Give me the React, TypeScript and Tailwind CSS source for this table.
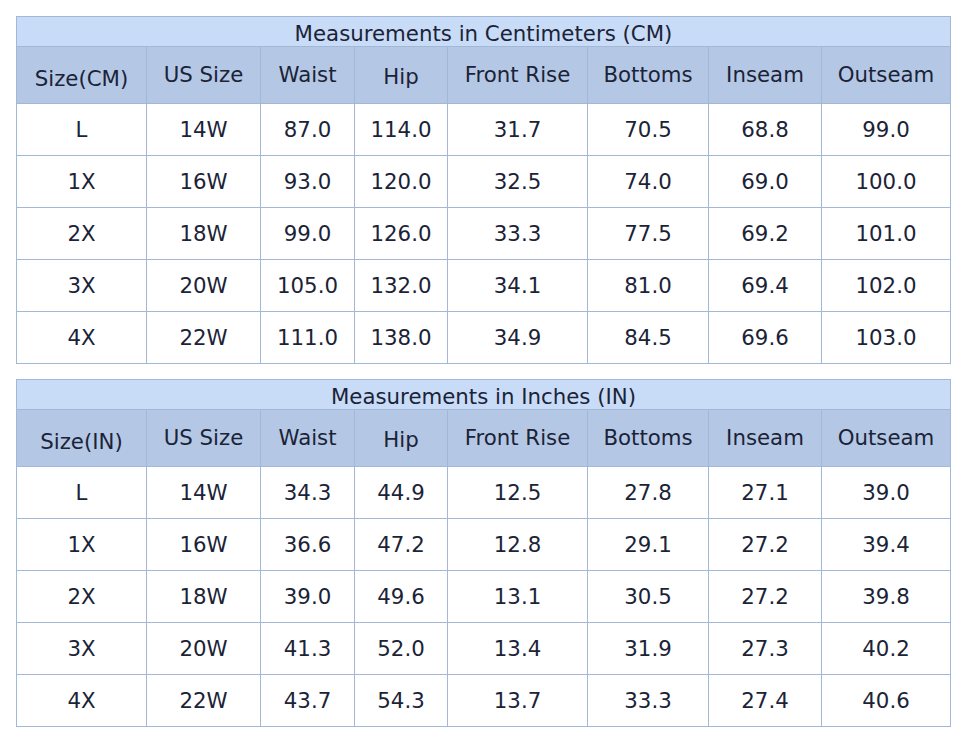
import React from "react";

const widths = ["w-[130px]", "w-[114px]", "w-[94px]", "w-[93px]", "w-[140px]", "w-[121px]", "w-[113px]", "w-[129px]"];

type T = { title: string; sizeLabel: string; rows: string[][] };

const cm: T = {
  title: "Measurements in Centimeters (CM)",
  sizeLabel: "Size(CM)",
  rows: [
    ["L", "14W", "87.0", "114.0", "31.7", "70.5", "68.8", "99.0"],
    ["1X", "16W", "93.0", "120.0", "32.5", "74.0", "69.0", "100.0"],
    ["2X", "18W", "99.0", "126.0", "33.3", "77.5", "69.2", "101.0"],
    ["3X", "20W", "105.0", "132.0", "34.1", "81.0", "69.4", "102.0"],
    ["4X", "22W", "111.0", "138.0", "34.9", "84.5", "69.6", "103.0"],
  ],
};

const inch: T = {
  title: "Measurements in Inches (IN)",
  sizeLabel: "Size(IN)",
  rows: [
    ["L", "14W", "34.3", "44.9", "12.5", "27.8", "27.1", "39.0"],
    ["1X", "16W", "36.6", "47.2", "12.8", "29.1", "27.2", "39.4"],
    ["2X", "18W", "39.0", "49.6", "13.1", "30.5", "27.2", "39.8"],
    ["3X", "20W", "41.3", "52.0", "13.4", "31.9", "27.3", "40.2"],
    ["4X", "22W", "43.7", "54.3", "13.7", "33.3", "27.4", "40.6"],
  ],
};

function Table({ t }: { t: T }) {
  const headers = [t.sizeLabel, "US Size", "Waist", "Hip", "Front Rise", "Bottoms", "Inseam", "Outseam"];
  const headerPad = ["pt-[7px]", "", "", "pt-[4px]", "", "", "", ""];
  return (
    <div className="w-[935px] border-l border-t border-[#a3b7d7]">
      <div className="h-[30px] border-r border-b border-[#a3b7d7] bg-[#c9dcf7] flex items-center justify-center pt-[5px] text-[21.3px] leading-none">
        {t.title}
      </div>
      <div className="flex h-[57px] bg-[#b4c8e6]">
        {headers.map((h, i) => (
          <div
            key={i}
            className={`${widths[i]} shrink-0 border-r border-b border-[#a3b7d7] flex items-center justify-center text-[21.3px] leading-none ${headerPad[i]}`}
          >
            {h}
          </div>
        ))}
      </div>
      {t.rows.map((r, ri) => (
        <div key={ri} className="flex h-[52px] bg-white">
          {r.map((c, ci) => (
            <div
              key={ci}
              className={`${widths[ci]} shrink-0 border-r border-b border-[#a3b7d7] flex items-center justify-center pt-[1px] text-[21.3px] leading-none`}
            >
              {c}
            </div>
          ))}
        </div>
      ))}
    </div>
  );
}

export default function App() {
  return (
    <div
      className="w-[966px] h-[748px] bg-white pl-4 pt-4 text-[#1b2337]"
      style={{ fontFamily: '"DejaVu Sans", Verdana, sans-serif' }}
    >
      <Table t={cm} />
      <div className="mt-[15px]">
        <Table t={inch} />
      </div>
    </div>
  );
}
